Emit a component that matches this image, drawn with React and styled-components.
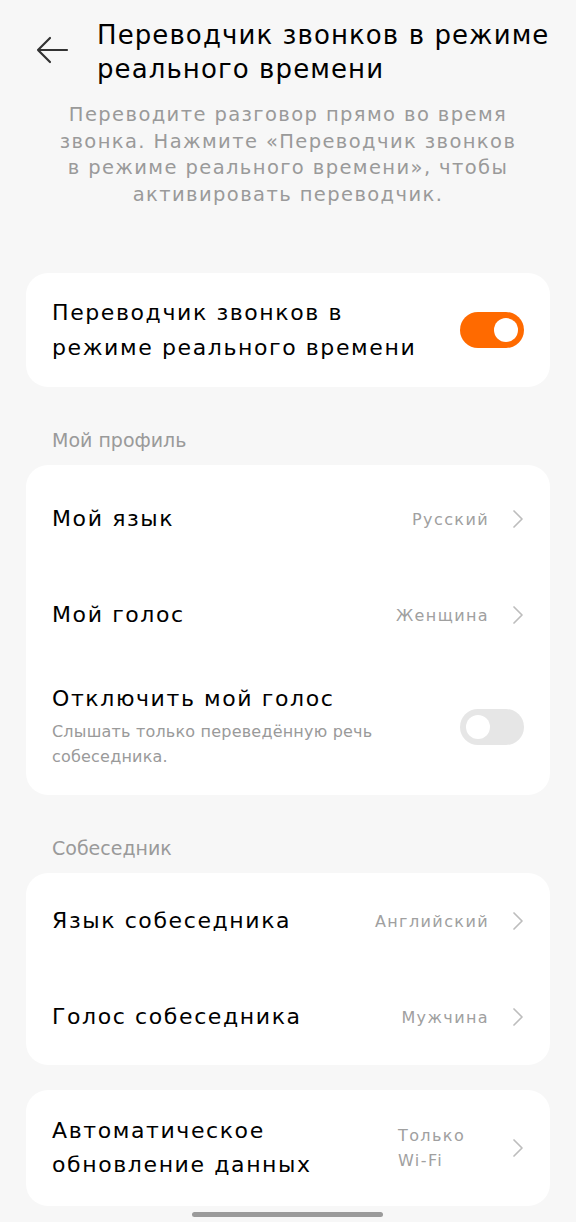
import React from "react";
import styled, { createGlobalStyle } from "styled-components";

const Global = createGlobalStyle`
  html, body { margin: 0; padding: 0; background: #f7f7f7; }
  body { font-family: "DejaVu Sans", "Noto Sans", sans-serif; }
  * { box-sizing: border-box; }
`;

const Page = styled.div`
  position: relative;
  width: 576px;
  min-height: 1222px;
  background: #f7f7f7;
  padding: 0 26px 20px;
  overflow: hidden;
`;

const Header = styled.div`
  display: flex;
  align-items: flex-start;
  padding: 18px 0 0 8px;
`;

const BackButton = styled.button`
  width: 36px;
  height: 30px;
  margin-top: 17px;
  margin-right: 27px;
  padding: 0;
  border: none;
  background: none;
  display: flex;
  align-items: center;
  justify-content: center;
  flex-shrink: 0;
`;

const Title = styled.h1`
  margin: 0;
  font-size: 26px;
  line-height: 34px;
  font-weight: 400;
  letter-spacing: 1.1px;
  color: #000;
`;

const Description = styled.p`
  margin: 16px 0 0;
  padding: 0 16px;
  text-align: center;
  font-size: 19.5px;
  line-height: 26.5px;
  letter-spacing: 1.4px;
  white-space: nowrap;
  color: #9a9a9a;
`;

const Card = styled.div`
  background: #fff;
  border-radius: 22px;
  padding: ${(p) => p.$pad || "0 26px"};
  margin-top: ${(p) => p.$mt || 0}px;
`;

const SectionLabel = styled.div`
  font-size: 19px;
  line-height: 26px;
  color: #9a9a9a;
  padding: 40px 26px 12px;
`;

const Row = styled.div`
  display: flex;
  align-items: center;
  justify-content: space-between;
  min-height: ${(p) => p.$h || 96}px;
  padding: ${(p) => p.$pad || "0"};
  gap: 16px;
`;

const TextBlock = styled.div`
  display: flex;
  flex-direction: column;
  flex: 1;
  min-width: 0;
`;

const RowTitle = styled.div`
  font-size: 22px;
  line-height: ${(p) => p.$lh || 30}px;
  letter-spacing: 1.6px;
  color: #000;
`;

const RowSub = styled.div`
  font-size: 16px;
  line-height: 25px;
  letter-spacing: 0.2px;
  color: #9a9a9a;
  margin-top: 5px;
  padding-right: 20px;
`;

const Value = styled.div`
  display: flex;
  align-items: center;
  gap: 23px;
  flex-shrink: 0;
  font-size: 16px;
  line-height: 25px;
  letter-spacing: 1.4px;
  color: #a0a0a0;
`;

const ValueText = styled.span`
  width: ${(p) => p.$w || "auto"};
`;

const Toggle = styled.div`
  width: 64px;
  height: 36px;
  border-radius: 18px;
  background: ${(p) => (p.$on ? "#ff6a00" : "#e6e6e6")};
  display: flex;
  align-items: center;
  justify-content: ${(p) => (p.$on ? "flex-end" : "flex-start")};
  padding: 0 6px;
  flex-shrink: 0;
`;

const Knob = styled.div`
  width: 24px;
  height: 24px;
  border-radius: 50%;
  background: #fff;
`;

const HomeBar = styled.div`
  position: absolute;
  left: 192px;
  bottom: 9px;
  width: 191px;
  height: 5px;
  border-radius: 3px;
  background: #9b9b9b;
`;

const Chevron = () => (
  <svg width="12" height="20" viewBox="0 0 12 20" fill="none">
    <path d="M2 2l8 8-8 8" stroke="#bdbdbd" strokeWidth="1.7" strokeLinecap="round" strokeLinejoin="round" />
  </svg>
);

const Arrow = () => (
  <svg width="34" height="28" viewBox="0 0 34 28" fill="none">
    <path d="M32 14H3M15 2L3 14l12 12" stroke="#333" strokeWidth="2.2" strokeLinecap="round" strokeLinejoin="round" />
  </svg>
);

const NavRow = ({ title, value, valueWidth }) => (
  <Row>
    <RowTitle>{title}</RowTitle>
    <Value>
      <ValueText $w={valueWidth}>{value}</ValueText>
      <Chevron />
    </Value>
  </Row>
);

export default function App() {
  return (
    <>
      <Global />
      <Page>
        <Header>
          <BackButton aria-label="Назад">
            <Arrow />
          </BackButton>
          <Title>Переводчик звонков в режиме реального времени</Title>
        </Header>
        <Description>
          Переводите разговор прямо во время
          <br />
          звонка. Нажмите «Переводчик звонков
          <br />
          в режиме реального времени», чтобы
          <br />
          активировать переводчик.
        </Description>

        <Card $mt={65}>
          <Row $h={114}>
            <RowTitle $lh={35}>
              Переводчик звонков в
              <br />
              режиме реального времени
            </RowTitle>
            <Toggle $on>
              <Knob />
            </Toggle>
          </Row>
        </Card>

        <SectionLabel>Мой профиль</SectionLabel>
        <Card $pad="6px 26px 0">
          <NavRow title="Мой язык" value="Русский" />
          <NavRow title="Мой голос" value="Женщина" />
          <Row $pad="21px 0 26px">
            <TextBlock>
              <RowTitle>Отключить мой голос</RowTitle>
              <RowSub>Слышать только переведённую речь собеседника.</RowSub>
            </TextBlock>
            <Toggle>
              <Knob />
            </Toggle>
          </Row>
        </Card>

        <SectionLabel>Собеседник</SectionLabel>
        <Card>
          <NavRow title="Язык собеседника" value="Английский" />
          <NavRow title="Голос собеседника" value="Мужчина" />
        </Card>

        <Card $mt={25}>
          <Row $h={116}>
            <RowTitle $lh={34}>
              Автоматическое
              <br />
              обновление данных
            </RowTitle>
            <Value>
              <ValueText $w="91px">Только Wi-Fi</ValueText>
              <Chevron />
            </Value>
          </Row>
        </Card>
        <HomeBar />
      </Page>
    </>
  );
}
